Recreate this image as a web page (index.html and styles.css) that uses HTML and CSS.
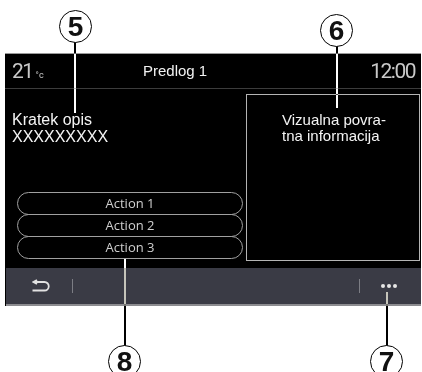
FILE: index.html
```html
<!DOCTYPE html>
<html>
<head>
<title>Predlog 1</title>
<link rel="stylesheet" href="styles.css">
</head>
<body>

<div class="page">

 <div class="screen">
  <div class="header">
   <div class="temp">21<span class="unit">°c</span></div>
   <div class="title">Predlog 1</div>
   <div class="time">12:00</div>
  </div>

  <div class="main">
   <div class="left">
    <div class="info">
     <p>Kratek opis</p>
     <p>XXXXXXXXX</p>
    </div>
    <div class="actions">
     <div class="action">Action 1</div>
     <div class="action">Action 2</div>
     <div class="action">Action 3</div>
    </div>
   </div>
   <div class="feedback">
    <p>Vizualna povra-<br>tna informacija</p>
   </div>
  </div>

  <div class="bar">
   <svg class="back" width="18" height="14" viewBox="0 0 18 14">
    <path d="M5 1 L1.5 3 L5 5 M1.5 3 H12.5 A4 4 0 0 1 12.5 11.5 H0.5" fill="none" stroke="#e2e2e2" stroke-width="1.8"/>
   </svg>
   <span class="sep sep-left"></span>
   <span class="spacer"></span>
   <span class="sep"></span>
   <span class="dots"><i></i><i></i><i></i></span>
  </div>
 </div>

 <!-- callouts -->
 <div class="lead lead-5"></div>
 <div class="lead lead-6"></div>
 <div class="lead lead-8"></div>
 <div class="lead lead-7"></div>
 <div class="num num-5">5</div>
 <div class="num num-6">6</div>
 <div class="num num-8">8</div>
 <div class="num num-7">7</div>

</div>

</body>
</html>
```

FILE: styles.css
```css
body {
 margin: 0;
 background: #fff;
 font-family: "Liberation Sans", Arial, sans-serif;
}
p { margin: 0; }

.page {
 position: relative;
 width: 422px;
 height: 372px;
 overflow: hidden;
 background: #fff;
 isolation: isolate;
}

.screen {
 margin: 53px 0 0 5px;
 width: 416px;
 background: #000;
 border-top: 1px solid #9a9a9a;
}

/* top bar */
.header {
 display: flex;
 align-items: center;
 height: 34px;
 padding: 0 6px 0 7px;
 border-bottom: 1px solid #3c3c3c;
}
.temp, .time {
 font-family: Roboto, sans-serif;
 font-size: 21px;
 letter-spacing: -1.5px;
 color: #c9c9c9;
}
.temp { width: 131px; }
.unit { font-size: 9px; margin-left: 3px; letter-spacing: 0; }
.title {
 flex: 1;
 font-size: 15px;
 color: #f2f2f2;
 padding-bottom: 2px;
}

/* content */
.main {
 display: grid;
 grid-template-columns: 241px 174px;
 height: 179px;
}
.left {
 display: flex;
 flex-direction: column;
}
.info {
 padding: 22px 0 0 7px;
 font-size: 16px;
 line-height: 17px;
 color: #f4f4f4;
}
.actions {
 margin: auto 0 9px 12px;
 width: 226px;
}
.action {
 height: 21px;
 line-height: 21px;
 border: 1px solid #a0a0a0;
 border-radius: 12px;
 text-align: center;
 font-family: "Open Sans", sans-serif;
 font-size: 13px;
 color: #cfcfcf;
}
.action + .action { margin-top: -1px; }

.feedback {
 margin: 5px 0 7px 0;
 border: 1px solid #b4b4b4;
 padding: 17px 0 0 35px;
 font-size: 15px;
 line-height: 16px;
 color: #f4f4f4;
}

/* bottom bar */
.bar {
 display: flex;
 align-items: center;
 height: 36px;
 margin-left: 1px;
 background: #3a3b45;
 border-bottom: 2px solid #8c8c90;
}
.back { margin-left: 26px; }
.sep {
 width: 1px;
 height: 14px;
 background: #7c7d84;
}
.sep-left { margin-left: 22px; }
.spacer { flex: 1; }
.dots {
 display: flex;
 gap: 2px;
 margin: 0 24px 0 21px;
}
.dots i {
 width: 4px;
 height: 4px;
 border-radius: 50%;
 background: #e6e6e6;
}

/* callouts */
.lead {
 position: absolute;
 width: 2px;
 background: #fff;
 mix-blend-mode: difference;
}
.lead-5 { left: 74px; top: 42px; height: 71px; }
.lead-6 { left: 336px; top: 46px; height: 62px; }
.lead-8 { left: 124px; top: 259px; height: 88px; }
.lead-7 { left: 386px; top: 292px; height: 55px; }

.num {
 position: absolute;
 width: 31px;
 height: 31px;
 border: 1.5px solid #000;
 border-radius: 50%;
 background: #fff;
 text-align: center;
 font-size: 28px;
 line-height: 32px;
 font-weight: bold;
 color: #111;
}
.num-5 { left: 59px; top: 10px; }
.num-6 { left: 320px; top: 14px; }
.num-8 { left: 108px; top: 345px; }
.num-7 { left: 370px; top: 345px; }
```
